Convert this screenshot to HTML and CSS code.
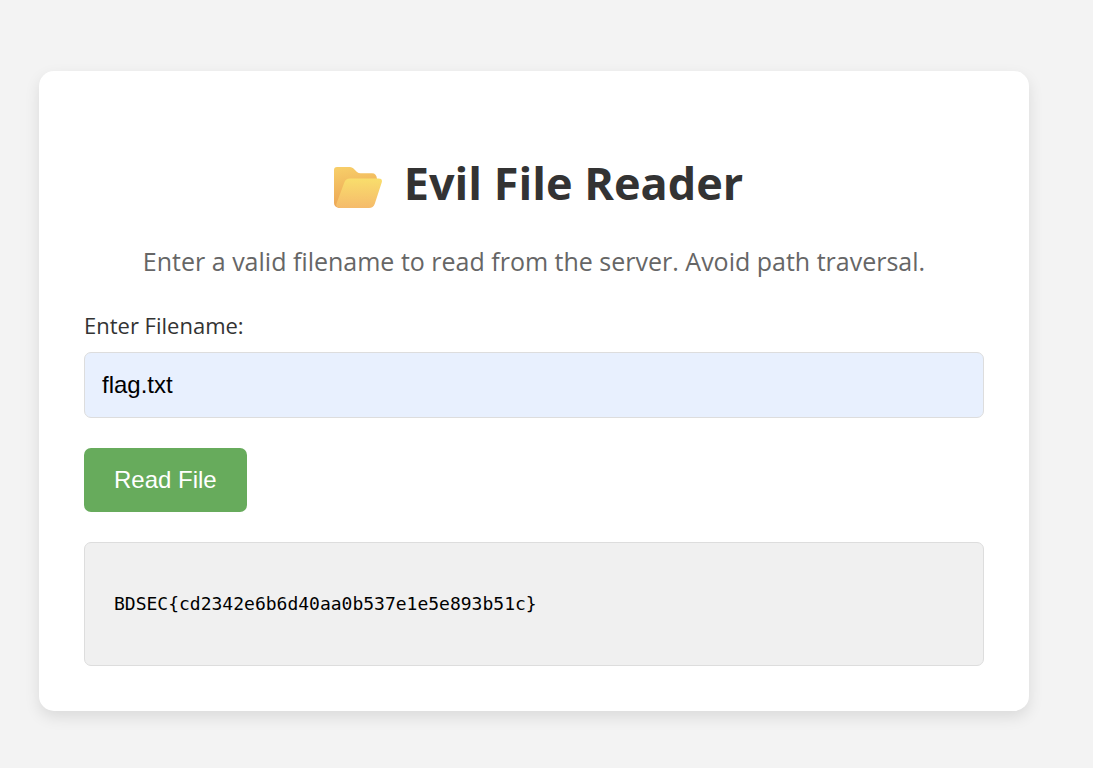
FILE: index.html
```html
<!DOCTYPE html>
<html lang="en">
<head>
  <meta charset="utf-8">
  <meta name="viewport" content="width=device-width, initial-scale=1">
  <title>Evil File Reader</title>
  <link rel="stylesheet" href="styles.css">
</head>
<body>
  <main class="card">
    <h1 class="title">
      <svg class="folder" viewBox="0 0 48 41" aria-hidden="true">
        <defs>
          <linearGradient id="back" x1="0.3" y1="0" x2="0.5" y2="1">
            <stop offset="0" stop-color="#f7cd68"/>
            <stop offset="1" stop-color="#eba253"/>
          </linearGradient>
          <linearGradient id="front" x1="0" y1="0" x2="0" y2="1">
            <stop offset="0" stop-color="#f9de6c"/>
            <stop offset="1" stop-color="#f5bb6b"/>
          </linearGradient>
        </defs>
        <path fill="url(#back)" d="M3 0H16Q18 0 19.500 1.500L23 5Q24.500 6.300 26.500 6.300H38Q42.500 6.300 43 12L34 37L5 41Q0 40 0 36V3Q0 0 3 0Z"/>
        <path fill="url(#front)" d="M16 11.500H44.500Q48.900 11.500 47.700 15.500L40.700 37Q39.300 41 35 41H6Q1.200 40.500 2.500 36.500L10.300 15.500Q11.700 11.500 16 11.500Z"/>
      </svg>
      <span>Evil File Reader</span>
    </h1>
    <p class="intro">Enter a valid filename to read from the server. Avoid path traversal.</p>
    <form class="form">
      <label class="label" for="filename">Enter Filename:</label>
      <input class="field" id="filename" name="filename" type="text" value="flag.txt">
      <button class="button" type="button">Read File</button>
    </form>
    <pre class="output">BDSEC{cd2342e6b6d40aa0b537e1e5e893b51c}</pre>
  </main>
</body>
</html>
```
FILE: styles.css
```css
* {
  box-sizing: border-box;
}

body {
  margin: 0;
  padding: 71px 64px 56px 39px;
  background: #f3f3f3;
  color: #333;
  font-family: "Segoe UI", "Open Sans", sans-serif;
}

.card {
  padding: 76px 45px 45px;
  border-radius: 15px;
  background: #fff;
  box-shadow: 0 6px 15px rgba(0, 0, 0, 0.1);
}

.title {
  display: flex;
  align-items: center;
  justify-content: center;
  gap: 22px;
  margin: 0;
  padding-left: 9px;
  font-size: 45px;
  line-height: 72px;
}

.folder {
  width: 48px;
  height: 41px;
  margin-top: 8px;
}

.intro {
  margin: 24px 0 28px;
  color: #666;
  font-size: 25px;
  line-height: 36px;
  text-align: center;
}

.form {
  display: flex;
  flex-direction: column;
  align-items: flex-start;
}

.label {
  margin-bottom: 9px;
  font-size: 22px;
  line-height: 36px;
}

.field {
  width: 100%;
  height: 66px;
  padding: 0 17px;
  border: 1px solid #ddd;
  border-radius: 7px;
  background: #e8f0fe;
  color: #000;
  font: 24px "Liberation Sans", Arial, sans-serif;
}

.button {
  margin: 30px 0;
  height: 64px;
  padding: 0 30px;
  border: 0;
  border-radius: 7px;
  background: #67ab5c;
  color: #fff;
  font: 24px "Liberation Sans", Arial, sans-serif;
}

.output {
  margin: 0;
  padding: 46px 29px 47px;
  border: 1px solid #ddd;
  border-radius: 7px;
  background: #f0f0f0;
  color: #000;
  font: 18px/29px "DejaVu Sans Mono", monospace;
  white-space: pre-wrap;
  overflow-wrap: anywhere;
}
```
